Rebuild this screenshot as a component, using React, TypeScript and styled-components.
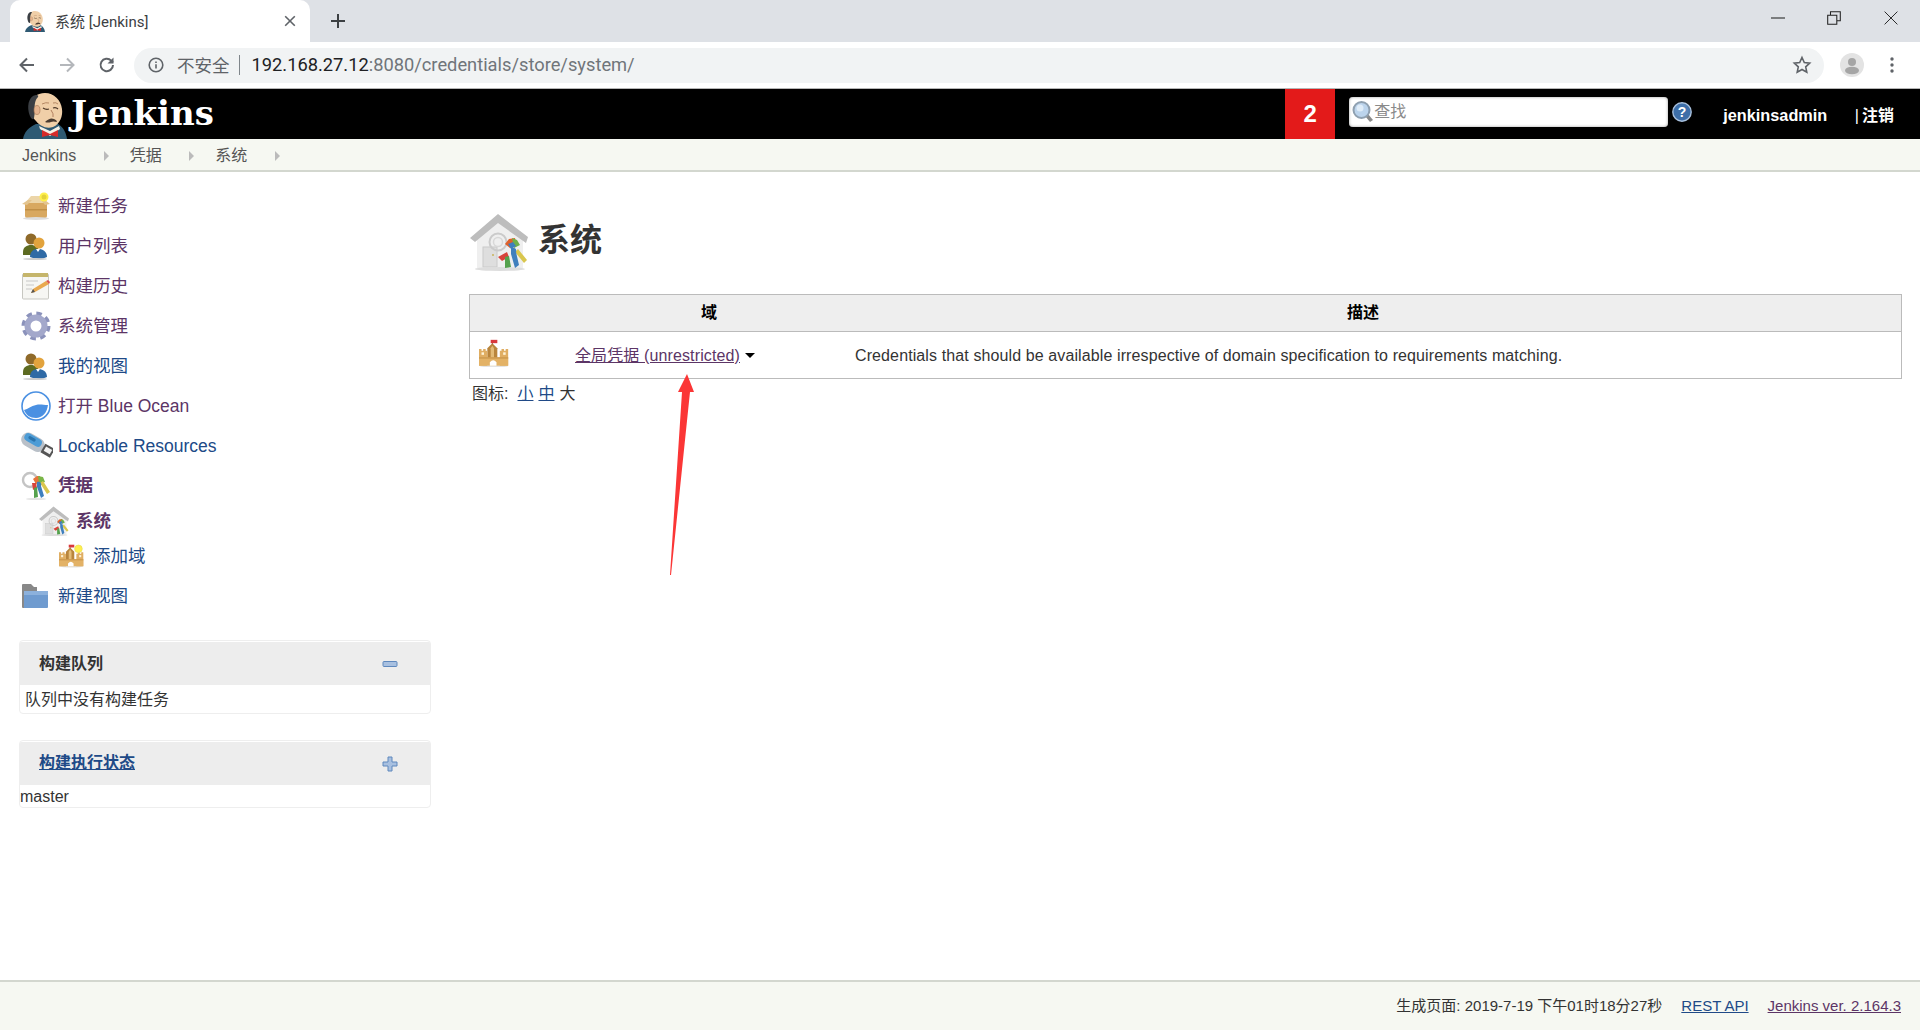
import React from "react";
import styled, { createGlobalStyle } from "styled-components";

const Global = createGlobalStyle`
  html, body { margin: 0; padding: 0; background: #fff; }
  body { font-family: "Liberation Sans", "Noto Sans CJK SC", sans-serif; font-size: 16px; line-height: 1.2; color: #333; }
  a { color: #204a87; }
`;

const Page = styled.div`
  position: relative;
  display: flex;
  flex-direction: column;
  width: 1920px;
  height: 1030px;
  overflow: hidden;
`;

/* browser chrome */
const TabStrip = styled.div`
  display: flex;
  align-items: flex-end;
  height: 42px;
  background: #dee1e6;
`;
const Tab = styled.div`
  display: flex;
  align-items: center;
  width: 300px;
  height: 42px;
  margin-left: 10px;
  padding: 0 12px 0 15px;
  box-sizing: border-box;
  background: #fff;
  border-radius: 10px 10px 0 0;
`;
const TabTitle = styled.span`
  flex: 1;
  margin: -2px 0 0 10px;
  font: 15px "Roboto", "Noto Sans CJK SC", sans-serif;
  color: #3c4043;
`;
const NewTab = styled.div`
  display: flex;
  align-self: center;
  margin-left: 18px;
`;
const WindowControls = styled.div`
  display: flex;
  align-self: flex-start;
  align-items: center;
  margin-left: auto;
  height: 36px;
  gap: 42px;
  padding-right: 21px;
`;
const Toolbar = styled.div`
  display: flex;
  align-items: center;
  height: 47px;
  box-sizing: border-box;
  padding: 0 11px 0 17px;
  background: #fff;
  border-bottom: 1px solid #b5b5b5;
`;
const NavButtons = styled.div`
  display: flex;
  gap: 20px;
  margin-right: 17px;
`;
const UrlBar = styled.div`
  display: flex;
  align-items: center;
  width: 1690px;
  height: 35px;
  box-sizing: border-box;
  padding: 0 12px 0 14px;
  background: #f1f3f4;
  border-radius: 18px;
  font: 18.3px "Roboto", "Noto Sans CJK SC", sans-serif;
`;
const Insecure = styled.span`
  margin: -1px 0 0 13px;
  color: #5f6368;
  font-size: 17.5px;
`;
const UrlDivider = styled.span`
  width: 1px;
  height: 20px;
  margin: 0 12px 0 9px;
  background: #80868b;
`;
const UrlHost = styled.span`
  margin-top: -2px;
  color: #202124;
`;
const UrlPath = styled.span`
  flex: 1;
  margin-top: -2px;
  color: #70757a;
`;
const ToolbarRight = styled.div`
  display: flex;
  align-items: center;
  gap: 26px;
  margin-left: 16px;
`;

/* jenkins header */
const Header = styled.header`
  display: flex;
  align-items: stretch;
  height: 50px;
  background: #000;
  color: #fff;
`;
const LogoBox = styled.div`
  display: flex;
  align-items: flex-end;
  margin-left: 23px;
`;
const Brand = styled.span`
  align-self: center;
  margin-left: 4px;
  font: bold 34px/50px "DejaVu Serif", serif;
  margin-top: -3px;
`;
const Badge = styled.div`
  display: flex;
  align-items: center;
  justify-content: center;
  width: 50px;
  margin-left: auto;
  background: #e31a1a;
  font: bold 24px "Liberation Sans", sans-serif;
`;
const SearchBox = styled.div`
  display: flex;
  align-items: center;
  align-self: center;
  width: 319px;
  height: 30px;
  margin-left: 14px;
  margin-top: -4px;
  padding-left: 3px;
  box-sizing: border-box;
  background: #fff;
  border-radius: 4px;
  box-shadow: inset 0 0 3px #999;
  color: #8a8a8a;
  font-size: 16px;
`;
const HelpWrap = styled.div`
  display: flex;
  align-self: center;
  margin-left: 4px;
  margin-top: -4px;
`;
const UserName = styled.span`
  align-self: center;
  margin-left: 31px;
  font-weight: bold;
  font-size: 16.3px;
  margin-top: 4px;
`;
const Logout = styled.span`
  align-self: center;
  margin: 4px 26px 0 27.5px;
  font-weight: bold;
  font-size: 16px;
`;
const LogoutBar = styled.span`
  font-weight: normal;
  margin-right: 3px;
`;

/* breadcrumb */
const Breadcrumbs = styled.nav`
  display: flex;
  align-items: center;
  height: 33px;
  box-sizing: border-box;
  padding: 3px 0 0 22px;
  background: #f6f8f2;
  border-bottom: 2px solid #d3d7cf;
  font-size: 16px;
  color: #555;
`;
const Crumb = styled.span`
  color: #555;
`;
const CrumbArrow = styled.span`
  width: 0;
  height: 0;
  margin: 0 21px 0 27.5px;
  border-style: solid;
  border-width: 5px 0 5px 5px;
  border-color: transparent transparent transparent #bbb;
`;

/* body */
const Body = styled.div`
  display: flex;
  flex: 1;
  min-height: 0;
`;
const SidePanel = styled.aside`
  width: 431px;
  padding: 14px 0 0 19px;
  box-sizing: border-box;
  flex: none;
`;
const Task = styled.div<{ $h?: number; $indent?: number }>`
  display: flex;
  align-items: center;
  height: ${(p) => p.$h ?? 40}px;
  padding-left: ${(p) => (p.$indent ?? 0) + 2}px;
`;
const TaskIcon = styled.span<{ $w?: number }>`
  display: flex;
  flex: none;
  width: ${(p) => p.$w ?? 37}px;
`;
const TaskLink = styled.a<{ $visited?: boolean; $bold?: boolean }>`
  font-size: 17.5px;
  font-weight: ${(p) => (p.$bold ? "bold" : "normal")};
  color: ${(p) => (p.$visited ? "#5c3566" : "#204a87")};
  text-decoration: none;
`;
const Pane = styled.section<{ $top: number }>`
  margin-top: ${(p) => p.$top}px;
  border: 1px solid #eee;
  border-radius: 4px;
  overflow: hidden;
`;
const PaneHead = styled.div`
  display: flex;
  align-items: center;
  justify-content: space-between;
  height: 43px;
  padding: 0 32px 0 19px;
  margin-top: 1px;
  background: #ededed;
  font-weight: bold;
  color: #333;
`;
const PaneLink = styled.a`
  margin-top: -2px;
  color: #204a87;
  text-decoration: underline;
`;
const PaneBody = styled.div<{ $left: number }>`
  height: 28px;
  line-height: 30px;
  padding-left: ${(p) => p.$left}px;
  color: #333;
`;
const PaneBodyShort = styled(PaneBody)`
  height: 22px;
  line-height: 24px;
`;

const Main = styled.main`
  flex: 1;
  min-width: 0;
  padding: 41px 18px 0 38px;
`;
const TitleRow = styled.div`
  display: flex;
  align-items: center;
  height: 58px;
  padding-left: 1px;
`;
const Title = styled.h1`
  margin: -4px 0 0 10px;
  font-size: 32px;
  font-weight: bold;
  color: #333;
`;
const Table = styled.table`
  width: 100%;
  margin-top: 23px;
  border-collapse: collapse;
  table-layout: fixed;
  border: 1px solid #bbb;
`;
const Th = styled.th<{ $w?: number }>`
  height: 36px;
  padding: 0;
  background: #eee;
  border-bottom: 1px solid #bbb;
  font-size: 16px;
  color: #000;
  width: ${(p) => (p.$w ? `${p.$w}px` : "auto")};
`;
const Td = styled.td`
  height: 47px;
  padding: 2px 0 0;
  box-sizing: border-box;
  font-size: 16px;
  color: #333;
`;
const IconCell = styled(Td)`
  padding: 0 0 0 9px;
`;
const DomainLink = styled.a`
  margin-left: 2px;
  color: #5c3566;
  text-decoration: underline;
  letter-spacing: 0.12px;
`;
const MenuCaret = styled.span`
  display: inline-block;
  width: 0;
  height: 0;
  margin-left: 5px;
  vertical-align: 3px;
  border-style: solid;
  border-width: 5px 5px 0 5px;
  border-color: #000 transparent transparent transparent;
`;
const DescCell = styled(Td)`
  padding-left: 10px;
  letter-spacing: 0.11px;
`;
const IconSizes = styled.div`
  display: flex;
  gap: 5px;
  margin-top: 5px;
  padding-left: 3px;
  font-size: 16px;
  color: #333;
`;
const SizeLabel = styled.span`
  margin-right: 4px;
`;
const SizeLink = styled.a`
  color: #204a87;
  text-decoration: underline;
`;
const SizePlain = styled.span`
  color: #333;
`;

const Footer = styled.footer`
  display: flex;
  align-items: center;
  justify-content: flex-end;
  gap: 19px;
  height: 50px;
  box-sizing: border-box;
  padding: 0 19px 1px 0;
  background: #f6f8f2;
  border-top: 2px solid #d3d7cf;
  font-size: 15px;
  color: #333;
`;
const FootLink = styled.a<{ $visited?: boolean }>`
  color: ${(p) => (p.$visited ? "#5c3566" : "#204a87")};
  text-decoration: underline;
`;
const Annotation = styled.svg`
  position: absolute;
  left: 660px;
  top: 370px;
`;

/* icons */
const JenkinsHead = ({ w, h }: { w: number; h: number }) => (
  <svg width={w} height={h} viewBox="3 4 44 46">
    <path d="M3 50C4 43 9 38 16 35h22c5 3 8 8 9 15z" fill="#2f5a73" />
    <path d="M19 37l11 5 9-5 1 3-10 7-10-7z" fill="#f4f0e6" />
    <path d="M10 18C10 9 17 4 25 4c9 0 16 7 17 16 1 7-2 15-9 18-7 2-13-1-17-6-4-4-6-8-6-14z" fill="#f0cfa8" />
    <path d="M11 29C7 22 7 11 13 7c4-2 6-1 5 1-3 3-4 8-3 14l-1 7c-1 2-2 1-3 0z" fill="#3b3f44" />
    <ellipse cx="17" cy="21" rx="3" ry="4.500" fill="#e5b48e" stroke="#a57552" strokeWidth=".6" />
    <path d="M23 19q3 2 6 1M33 19q3-1 5 1" stroke="#4a3525" strokeWidth="1.200" fill="none" />
    <path d="M22 15q4-2 7-1M33 14q3-1 5 1" stroke="#a57552" strokeWidth=".8" fill="none" />
    <path d="M31 21q3 4 2 7" stroke="#b17f5f" strokeWidth="1" fill="none" />
    <path d="M25 33q5-5 9-3 3 1 3 3-4-1-6 0-3 1-6 0z" fill="#4a3b30" />
    <path d="M22 41l8 4 8-4v7l-8-2-8 2z" fill="#d62a2a" />
  </svg>
);

const PackageIcon = () => (
  <svg width="30" height="28" viewBox="0 0 30 28">
    <path d="M4 11h22v13q0 2-2 2H6q-2 0-2-2z" fill="#d8a860" />
    <path d="M4 11l6-7h12l4 7z" fill="#ecd5a8" />
    <path d="M1 12l6-4h4L6 13zM29 12l-5-4h-4l4 5z" fill="#e3c48f" />
    <rect x="4" y="17" width="22" height="1.500" fill="#c08f47" />
    <ellipse cx="15" cy="26.500" rx="13" ry="1.400" fill="#ddd" />
    <circle cx="23" cy="5" r="4.500" fill="#fff04c" />
    <circle cx="23" cy="5" r="2.500" fill="#e4d23b" />
  </svg>
);

const UsersIcon = () => (
  <svg width="28" height="28" viewBox="0 0 28 28">
    <path d="M2 20c0-5 4-7 8-7s8 2 8 7v3H2z" fill="#5d6b22" />
    <circle cx="10" cy="7" r="5.500" fill="#8f6a2a" />
    <path d="M9 25c0-6 4-8 8-8s9 2 9 8q-8 4-17 0z" fill="#2f6aa5" />
    <path d="M15 17l2 3 2-3z" fill="#fff" />
    <circle cx="18" cy="11" r="5.500" fill="#e2a33d" />
    <ellipse cx="14" cy="27" rx="12" ry="1" fill="#ccc" />
  </svg>
);

const NotepadIcon = () => (
  <svg width="30" height="28" viewBox="0 0 30 28">
    <rect x="1.500" y="2" width="26" height="25" rx="1" fill="#f6f6f3" stroke="#c7c7c1" />
    <rect x="2" y="1" width="25" height="4" fill="#c5b56b" />
    <path d="M5 9h12M5 13h8M5 17h6" stroke="#c8c8c8" strokeWidth="1.200" />
    <path d="M10 21l2-4L25 9l3 3-14 8z" fill="#e9a94e" />
    <path d="M25 9l3 3 1-2-2-2z" fill="#d9534f" />
    <path d="M10 21l2-4 2 3z" fill="#555" />
  </svg>
);

const GearIcon = () => (
  <svg width="30" height="30" viewBox="0 0 30 30">
    <circle cx="15" cy="15" r="12" fill="none" stroke="#8b92bb" strokeWidth="5" strokeDasharray="5.200 4.220" />
    <circle cx="15" cy="15" r="8.500" fill="none" stroke="#a3a8cb" strokeWidth="6" />
    <circle cx="15" cy="15" r="4.500" fill="#fff" />
  </svg>
);

const OceanIcon = () => (
  <svg width="30" height="30" viewBox="0 0 30 30">
    <circle cx="15" cy="15" r="14" fill="#fff" stroke="#4a90e2" strokeWidth="1.600" />
    <path d="M3 19c4-1 7-4 12-5 4-1 7 0 12 0-1 8-6 13-12 13-6 0-10-3-12-8z" fill="#4a90e2" />
  </svg>
);

const UsbIcon = () => (
  <svg width="32" height="30" viewBox="0 0 32 30">
    <g transform="rotate(30 15 13)">
      <rect x="-1" y="6" width="25" height="14" rx="7" fill="#b9c0c8" />
      <rect x="1" y="7" width="19" height="8" rx="4" fill="#4d9cd6" />
      <rect x="5" y="9" width="8" height="3" rx="1.500" fill="#2b74ad" />
      <rect x="23" y="8" width="11" height="10" fill="#555" />
      <rect x="25" y="10" width="7" height="5" fill="#f2f2f2" />
    </g>
  </svg>
);

const KeysIcon = () => (
  <svg width="30" height="30" viewBox="0 0 30 30">
    <circle cx="9" cy="10" r="7" fill="none" stroke="#c4c4c4" strokeWidth="2.400" />
    <path d="M12 9l4-3 3 0 1 6-5 2z" fill="#e8743b" />
    <path d="M17 6l5 1 2 5-6 2z" fill="#7ab648" />
    <path d="M22 11l7 11-3 2-7-11z" fill="#d9c64e" />
    <path d="M11 13l4 0 1 5-4 2z" fill="#d8433b" />
    <path d="M16 12c3-1 5 1 4 4l3 10-3 2-4-11z" fill="#3f7fbd" />
    <path d="M13 18l3-1 1 10-4 1z" fill="#55a14d" />
    <ellipse cx="15" cy="29" rx="10" ry="1" fill="#e2e2e2" />
  </svg>
);

const HouseIcon = ({ s }: { s: number }) => (
  <svg width={s} height={s} viewBox="0 0 58 58">
    <path d="M7 20L28 6l25 16v33H7z" fill="#efefef" />
    <path d="M0 25L28 1l30 23-2 6L28 10 5 29z" fill="#bdbdbd" />
    <rect x="13" y="34" width="14" height="20" fill="#dedede" stroke="#cacaca" />
    <circle cx="23" cy="42" r="1" fill="#c9b35a" />
    <ellipse cx="30" cy="56" rx="25" ry="2" fill="#ddd" />
    <circle cx="28" cy="29" r="8.500" fill="none" stroke="#cbcbcb" strokeWidth="2" />
    <circle cx="28" cy="29" r="4.500" fill="none" stroke="#d8d8d8" strokeWidth="1.500" />
    <path d="M35 31l4-5 6-1 1 6-6 4z" fill="#e0602a" />
    <path d="M42 25l5 2 3 5-6 3z" fill="#6fb04a" />
    <path d="M38 31l5-2 3 4-5 3z" fill="#3f7fbd" />
    <path d="M48 36l9 11-3 3-9-11z" fill="#d9c64e" />
    <path d="M28 44l9-5 2 5-7 4z" fill="#d8433b" />
    <path d="M41 35c4-1 6 1 5 4l3 13-4 3-4-14z" fill="#3f7fbd" />
    <path d="M35 44l4-1 2 11-6 1z" fill="#55a14d" />
  </svg>
);

const CastleIcon = ({ s, plus }: { s: number; plus?: boolean }) => (
  <svg width={s} height={(s * 34) / 36} viewBox="0 0 36 34">
    <ellipse cx="18" cy="32.500" rx="17" ry="1.400" fill="#e3e3e3" />
    <path d="M10 11L16 5l6 6v16H10z" fill="#b9853c" />
    <path d="M14 24V11l2-3 2 3v13z" fill="#e3bb77" />
    <path d="M0 12h3v2h2v-2h3v2h2v18H0zM25 14h2v-2h3v2h2v-2h3v20H25z" fill="#e0ae63" />
    <rect x="0" y="22" width="35" height="10" fill="#e3b266" />
    <path d="M0 22h35v1.500H0z" fill="#c9954a" />
    <rect x="3" y="16" width="3" height="3" fill="#fff3d6" />
    <rect x="29" y="16" width="3" height="3" fill="#fff3d6" />
    <rect x="15.500" y="1.500" width="1" height="5" fill="#8a6a3a" />
    <path d="M14 1h8v4h-8z" fill="#d9383c" />
    <path d="M13 32v-4q4-5 8 0v4z" fill="#fff" />
    {plus && <circle cx="28" cy="7" r="5.500" fill="#fff04c" stroke="#e8dc5a" />}
  </svg>
);

const FolderIcon = () => (
  <svg width="28" height="26" viewBox="0 0 28 26">
    <path d="M1 2q0-1 1-1h8l3 3h3v21H2q-1 0-1-1z" fill="#888" />
    <path d="M3 8h24v16q0 1-1 1H3z" fill="#6f9bcf" />
    <path d="M3 8h24v4H3z" fill="#8cb1dc" />
  </svg>
);

const SearchGlass = () => (
  <svg width="22" height="24" viewBox="0 0 22 24">
    <path d="M13 16l5 6 3-2-5-6z" fill="#8a8a8a" />
    <circle cx="9.500" cy="10" r="8" fill="#bcd4ec" stroke="#8fa0b0" strokeWidth="2" />
    <circle cx="8" cy="8" r="3.500" fill="#dfecf8" />
  </svg>
);

const HelpIcon = () => (
  <svg width="20" height="20" viewBox="0 0 20 20">
    <circle cx="10" cy="10" r="9.200" fill="#3d6ea8" stroke="#a9c1de" strokeWidth="1.400" />
    <text x="10" y="15" textAnchor="middle" fontSize="14" fontWeight="bold" fill="#fff" fontFamily="Liberation Sans">?</text>
  </svg>
);

const ChromeIcon = ({ children, s = 20, c = "#5f6368" }: { children: React.ReactNode; s?: number; c?: string }) => (
  <svg width={s} height={s} viewBox="0 0 20 20" fill="none" stroke={c} strokeWidth="2">
    {children}
  </svg>
);

const MinusIcon = () => (
  <svg width="16" height="8" viewBox="0 0 16 8">
    <rect x="1" y="1.500" width="14" height="5" rx="1" fill="#a8c0e0" stroke="#5f88bd" />
  </svg>
);
const PlusIcon = () => (
  <svg width="16" height="16" viewBox="0 0 16 16">
    <path d="M6 1h4v5h5v4h-5v5H6v-5H1V6h5z" fill="#a8c0e0" stroke="#5f88bd" />
  </svg>
);

const tasks = [
  { label: "新建任务", icon: <PackageIcon />, visited: true },
  { label: "用户列表", icon: <UsersIcon />, visited: true },
  { label: "构建历史", icon: <NotepadIcon />, visited: true },
  { label: "系统管理", icon: <GearIcon />, visited: true },
  { label: "我的视图", icon: <UsersIcon />, visited: false },
  { label: "打开 Blue Ocean", icon: <OceanIcon />, visited: true },
  { label: "Lockable Resources", icon: <UsbIcon />, visited: false },
];

export default function App() {
  return (
    <Page>
      <Global />
      <TabStrip>
        <Tab>
          <JenkinsHead w={20} h={21} />
          <TabTitle>系统 [Jenkins]</TabTitle>
          <ChromeIcon s={16} c="#5f6368">
            <path d="M4 4l12 12M16 4L4 16" />
          </ChromeIcon>
        </Tab>
        <NewTab>
          <ChromeIcon s={20} c="#3c4043">
            <path d="M10 3v14M3 10h14" />
          </ChromeIcon>
        </NewTab>
        <WindowControls>
          <ChromeIcon s={14} c="#222">
            <path d="M0 10h20" strokeWidth="1.500" />
          </ChromeIcon>
          <ChromeIcon s={14} c="#222">
            <path d="M1 6h13v13H1zM5 6V1h14v13h-5" strokeWidth="1.500" />
          </ChromeIcon>
          <ChromeIcon s={16} c="#222">
            <path d="M2 2l16 16M18 2L2 18" strokeWidth="1.200" />
          </ChromeIcon>
        </WindowControls>
      </TabStrip>
      <Toolbar>
        <NavButtons>
          <ChromeIcon>
            <path d="M17 10H4M10 3.500L3.500 10l6.500 6.500" />
          </ChromeIcon>
          <ChromeIcon c="#b4b7bb">
            <path d="M3 10h13M10 3.500l6.500 6.500-6.500 6.500" />
          </ChromeIcon>
          <ChromeIcon>
            <path d="M16 10a6.200 6.200 0 1 1-1.800-4.400L16 7.500" />
            <path d="M16.500 2.500v6h-6" fill="#5f6368" strokeWidth="0" />
          </ChromeIcon>
        </NavButtons>
        <UrlBar>
          <ChromeIcon s={16}>
            <circle cx="10" cy="10" r="8.500" />
            <path d="M10 9v5.500M10 5.500v2" />
          </ChromeIcon>
          <Insecure>不安全</Insecure>
          <UrlDivider />
          <UrlHost>192.168.27.12</UrlHost>
          <UrlPath>:8080/credentials/store/system/</UrlPath>
          <ChromeIcon s={20} c="#5f6368">
            <path d="M10 2.500l2.300 5 5.400.6-4 3.700 1.100 5.400L10 14.500l-4.800 2.700 1.100-5.400-4-3.700 5.400-.6z" strokeWidth="1.600" />
          </ChromeIcon>
        </UrlBar>
        <ToolbarRight>
          <svg width="24" height="24" viewBox="0 0 24 24">
            <circle cx="12" cy="12" r="12" fill="#e3e3e3" />
            <circle cx="12" cy="9" r="4" fill="#a5a5a5" />
            <ellipse cx="12" cy="17.500" rx="7" ry="3.800" fill="#a5a5a5" />
          </svg>
          <svg width="4" height="18" viewBox="0 0 4 18">
            <circle cx="2" cy="3" r="1.700" fill="#5f6368" />
            <circle cx="2" cy="9" r="1.700" fill="#5f6368" />
            <circle cx="2" cy="15" r="1.700" fill="#5f6368" />
          </svg>
        </ToolbarRight>
      </Toolbar>
      <Header>
        <LogoBox>
          <JenkinsHead w={44} h={46} />
        </LogoBox>
        <Brand>Jenkins</Brand>
        <Badge>2</Badge>
        <SearchBox>
          <SearchGlass />
          查找
        </SearchBox>
        <HelpWrap>
          <HelpIcon />
        </HelpWrap>
        <UserName>jenkinsadmin</UserName>
        <Logout>
          <LogoutBar>|</LogoutBar>注销
        </Logout>
      </Header>
      <Breadcrumbs>
        <Crumb>Jenkins</Crumb>
        <CrumbArrow />
        <Crumb>凭据</Crumb>
        <CrumbArrow />
        <Crumb>系统</Crumb>
        <CrumbArrow />
      </Breadcrumbs>
      <Body>
        <SidePanel>
          {tasks.map((t) => (
            <Task key={t.label}>
              <TaskIcon>{t.icon}</TaskIcon>
              <TaskLink $visited={t.visited}>{t.label}</TaskLink>
            </Task>
          ))}
          <Task $h={38}>
            <TaskIcon>
              <KeysIcon />
            </TaskIcon>
            <TaskLink $visited $bold>凭据</TaskLink>
          </Task>
          <Task $h={34} $indent={18}>
            <TaskIcon>
              <HouseIcon s={30} />
            </TaskIcon>
            <TaskLink $visited $bold>系统</TaskLink>
          </Task>
          <Task $h={36} $indent={38}>
            <TaskIcon $w={34}>
              <CastleIcon s={25} plus />
            </TaskIcon>
            <TaskLink>添加域</TaskLink>
          </Task>
          <Task $h={44}>
            <TaskIcon>
              <FolderIcon />
            </TaskIcon>
            <TaskLink>新建视图</TaskLink>
          </Task>
          <Pane $top={22}>
            <PaneHead>
              构建队列
              <MinusIcon />
            </PaneHead>
            <PaneBody $left={5}>队列中没有构建任务</PaneBody>
          </Pane>
          <Pane $top={26}>
            <PaneHead>
              <PaneLink>构建执行状态</PaneLink>
              <PlusIcon />
            </PaneHead>
            <PaneBodyShort $left={0}>master</PaneBodyShort>
          </Pane>
        </SidePanel>
        <Main>
          <TitleRow>
            <HouseIcon s={58} />
            <Title>系统</Title>
          </TitleRow>
          <Table>
            <thead>
              <tr>
                <Th $w={103} />
                <Th $w={272}>域</Th>
                <Th>描述</Th>
                <Th $w={20} />
              </tr>
            </thead>
            <tbody>
              <tr>
                <IconCell>
                  <CastleIcon s={30} />
                </IconCell>
                <Td>
                  <DomainLink>全局凭据 (unrestricted)</DomainLink>
                  <MenuCaret />
                </Td>
                <DescCell colSpan={2}>
                  Credentials that should be available irrespective of domain specification to requirements matching.
                </DescCell>
              </tr>
            </tbody>
          </Table>
          <IconSizes>
            <SizeLabel>图标:</SizeLabel>
            <SizeLink>小</SizeLink>
            <SizeLink>中</SizeLink>
            <SizePlain>大</SizePlain>
          </IconSizes>
        </Main>
      </Body>
      <Footer>
        <span>生成页面: 2019-7-19 下午01时18分27秒</span>
        <FootLink>REST API</FootLink>
        <FootLink $visited>Jenkins ver. 2.164.3</FootLink>
      </Footer>
      <Annotation width="40" height="210" viewBox="0 0 40 210">
        <path d="M27 4L34 22H30L11 205H10L22 22H18z" fill="#fb3636" />
      </Annotation>
    </Page>
  );
}
